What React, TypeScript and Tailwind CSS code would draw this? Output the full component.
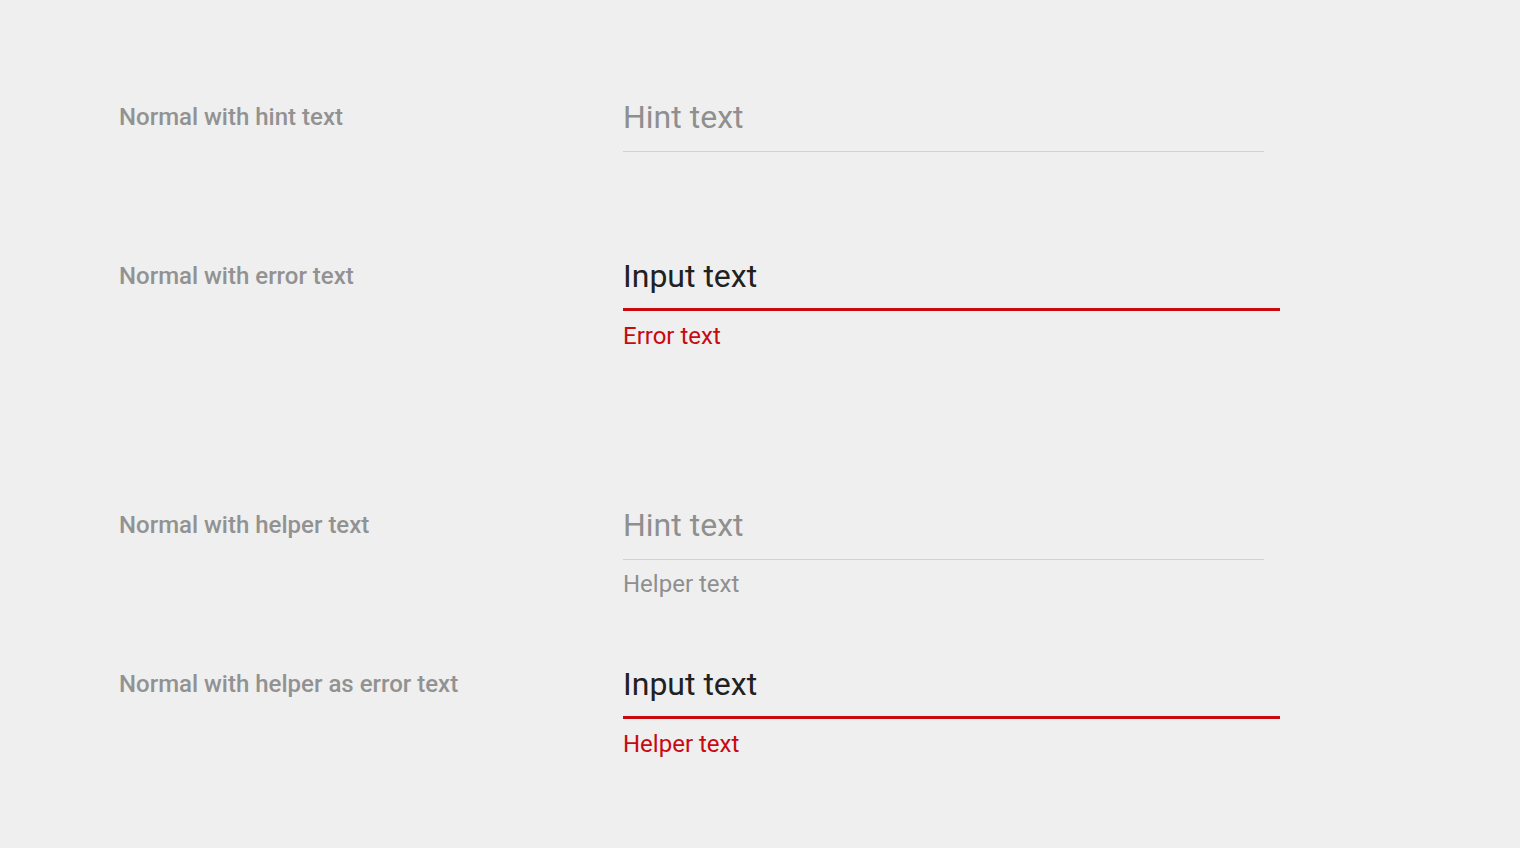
const rows = [
  { label: "Normal with hint text", value: "Hint text", filled: false, error: false, helper: null as string | null, height: "h-[159px]" },
  { label: "Normal with error text", value: "Input text", filled: true, error: true, helper: "Error text", height: "h-[249px]" },
  { label: "Normal with helper text", value: "Hint text", filled: false, error: false, helper: "Helper text", height: "h-[159px]" },
  { label: "Normal with helper as error text", value: "Input text", filled: true, error: true, helper: "Helper text", height: "h-[159px]" },
];

function Field({ value, filled, error, helper }: { value: string; filled: boolean; error: boolean; helper: string | null }) {
  return (
    <div className="flex flex-col">
      <div className={`h-[40px] leading-[40px] text-[32px] ${filled ? "text-[#212121]" : "text-[#8f8f8f]"}`}>{value}</div>
      {error ? (
        <div className="mt-[12px] h-[3px] w-[657px] bg-[#c80a0e]" />
      ) : (
        <div className="mt-[14px] h-px w-[641px] bg-[#d2d2d2]" />
      )}
      {helper && (
        <div
          className={`leading-[32px] text-[24px] ${error ? "mt-[9px] text-[#c80a0e]" : "mt-[8px] text-[#8f8f8f]"}`}
        >
          {helper}
        </div>
      )}
    </div>
  );
}

export default function App() {
  return (
    <div className="min-h-[848px] w-full bg-[#efefef] pt-[97px] pl-[119px] font-['Roboto','Liberation_Sans',sans-serif]">
      {rows.map((r, i) => (
        <div key={i} className={`flex items-start ${r.height}`}>
          <div className="w-[504px] shrink-0 h-[40px] leading-[40px] text-[24px] font-medium text-[#929292]">{r.label}</div>
          <Field value={r.value} filled={r.filled} error={r.error} helper={r.helper} />
        </div>
      ))}
    </div>
  );
}
